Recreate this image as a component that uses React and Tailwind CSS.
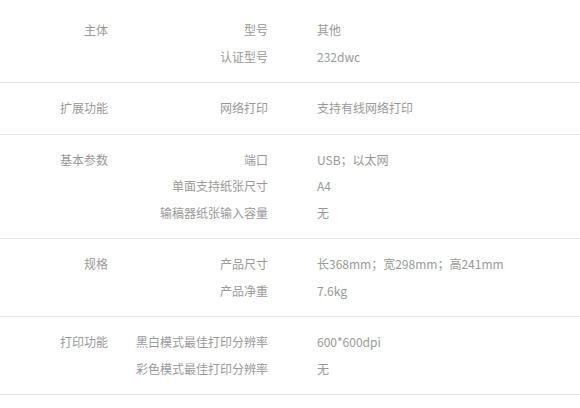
import React from "react";

const grupos = [
  {
    titulo: "主体",
    itens: [
      ["型号", "其他"],
      ["认证型号", "232dwc"],
    ],
  },
  { titulo: "扩展功能", itens: [["网络打印", "支持有线网络打印"]] },
  {
    titulo: "基本参数",
    itens: [
      ["端口", "USB；以太网"],
      ["单面支持纸张尺寸", "A4"],
      ["输稿器纸张输入容量", "无"],
    ],
  },
  {
    titulo: "规格",
    itens: [
      ["产品尺寸", "长368mm；宽298mm；高241mm"],
      ["产品净重", "7.6kg"],
    ],
  },
  {
    titulo: "打印功能",
    itens: [
      ["黑白模式最佳打印分辨率", "600*600dpi"],
      ["彩色模式最佳打印分辨率", "无"],
    ],
  },
];

export default function App() {
  return (
    <div
      className="w-[580px] h-[408px] bg-white pt-[5px] text-[12px] text-[#999999]"
      style={{ fontFamily: '"Microsoft YaHei", "Noto Sans CJK SC", sans-serif' }}
    >
      {grupos.map((g) => (
        <div key={g.titulo} className="flex py-3 border-b border-[#e8e8e8]">
          <div className="w-[108px] text-right leading-[26.5px] shrink-0">{g.titulo}</div>
          <div className="flex-1">
            {g.itens.map(([k, v]) => (
              <div key={k} className="flex leading-[26.5px]">
                <div className="w-[160px] text-right shrink-0">{k}</div>
                <div className="ml-[49px]">{v}</div>
              </div>
            ))}
          </div>
        </div>
      ))}
    </div>
  );
}
